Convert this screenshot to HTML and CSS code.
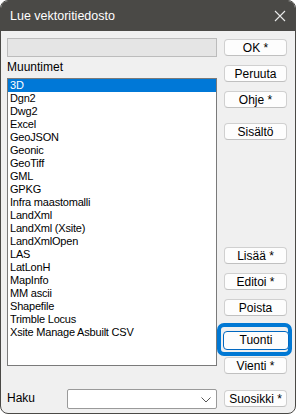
FILE: index.html
```html
<!DOCTYPE html>
<html lang="fi">
<head>
    <meta charset="UTF-8">
    <title>Lue vektoritiedosto</title>
    <link rel="stylesheet" href="styles.css">
</head>
<body>
    <div class="window">
        <div class="titlebar">
            <span class="title">Lue vektoritiedosto</span>
            <svg class="close" width="12" height="12" viewBox="0 0 12 12">
                <path d="M1 1 L11 11 M11 1 L1 11" stroke="#e8e8e8" stroke-width="1.1" fill="none"/>
            </svg>
        </div>
        <div class="content">
            <div class="left">
                <div class="path-field"></div>
                <div class="label">Muuntimet</div>
                <div class="list">
                    <div class="item selected">3D</div>
                    <div class="item">Dgn2</div>
                    <div class="item">Dwg2</div>
                    <div class="item">Excel</div>
                    <div class="item">GeoJSON</div>
                    <div class="item">Geonic</div>
                    <div class="item">GeoTiff</div>
                    <div class="item">GML</div>
                    <div class="item">GPKG</div>
                    <div class="item">Infra maastomalli</div>
                    <div class="item">LandXml</div>
                    <div class="item">LandXml (Xsite)</div>
                    <div class="item">LandXmlOpen</div>
                    <div class="item">LAS</div>
                    <div class="item">LatLonH</div>
                    <div class="item">MapInfo</div>
                    <div class="item">MM ascii</div>
                    <div class="item">Shapefile</div>
                    <div class="item">Trimble Locus</div>
                    <div class="item">Xsite Manage Asbuilt CSV</div>
                </div>
                <div class="search-row">
                    <span class="search-label">Haku</span>
                    <div class="combo">
                        <svg width="10" height="6" viewBox="0 0 10 6">
                            <path d="M0.5 0.5 L5 5 L9.5 0.5" stroke="#555" stroke-width="1" fill="none"/>
                        </svg>
                    </div>
                </div>
            </div>
            <div class="right">
                <button class="btn btn-ok">OK *</button>
                <button class="btn btn-gap">Peruuta</button>
                <button class="btn btn-gap">Ohje *</button>
                <button class="btn btn-sisalto">Sisältö</button>
                <button class="btn btn-lisaa">Lisää *</button>
                <button class="btn btn-gap">Editoi *</button>
                <button class="btn btn-gap">Poista</button>
                <div class="focus-ring">
                    <button class="btn btn-focus">Tuonti</button>
                </div>
                <button class="btn btn-vienti">Vienti *</button>
                <button class="btn btn-suosikki">Suosikki *</button>
            </div>
        </div>
    </div>
</body>
</html>
```

FILE: styles.css
```css
body {
    margin: 0;
    background-color: #ffffff;
    font-family: "Liberation Sans", Arial, sans-serif;
}
.window {
    width: 296px;
    height: 414px;
    box-sizing: border-box;
    border: 1px solid #4a4946;
    border-radius: 8px;
    overflow: hidden;
    background-color: #f0f0f0;
}
.titlebar {
    height: 30px;
    background-color: #4a4946;
    display: flex;
    align-items: center;
    justify-content: space-between;
    padding: 0 9px 0 9px;
}
.title {
    color: #ffffff;
    font-size: 12.5px;
    margin-top: -1px;
}
.content {
    display: flex;
    padding: 0 0 0 6px;
}
.left {
    width: 210px;
    display: flex;
    flex-direction: column;
}
.path-field {
    margin-top: 7px;
    height: 19px;
    box-sizing: border-box;
    background-color: #e5e5e5;
    border: 1px solid #bcbcbc;
}
.label {
    font-size: 12px;
    height: 21px;
    line-height: 21px;
    color: #000;
}
.list {
    height: 288px;
    box-sizing: border-box;
    border: 1px solid #7a7a7a;
    background-color: #ffffff;
    font-size: 11px;
    letter-spacing: -0.2px;
}
.item {
    height: 13px;
    line-height: 13px;
    padding-left: 2px;
    color: #000;
    white-space: nowrap;
}
.item.selected {
    background-color: #0078d7;
    color: #ffffff;
}
.search-row {
    margin-top: 23px;
    display: flex;
    align-items: center;
}
.search-label {
    font-size: 12px;
    width: 60px;
    margin-top: -3px;
}
.combo {
    flex: 1;
    height: 20px;
    box-sizing: border-box;
    background-color: #ffffff;
    border: 1px solid #9a9a9a;
    border-radius: 2px;
    display: flex;
    align-items: center;
    justify-content: flex-end;
    padding-right: 5px;
    padding-top: 1px;
}
.right {
    width: 63px;
    margin-left: 7px;
    display: flex;
    flex-direction: column;
}
.btn {
    height: 17px;
    width: 63px;
    box-sizing: border-box;
    background-color: #fdfdfd;
    border: 1px solid #d0d0d0;
    border-bottom-color: #c0c0c0;
    border-radius: 4px;
    font-family: "Liberation Sans", Arial, sans-serif;
    font-size: 12px;
    color: #000;
    padding: 0;
    line-height: 14px;
}
.btn-ok {
    margin-top: 8px;
}
.btn-gap {
    margin-top: 9px;
}
.btn-sisalto {
    margin-top: 15px;
}
.btn-lisaa {
    margin-top: 107px;
}
.focus-ring {
    margin: 7px -5px 0 -7px;
    height: 33px;
    box-sizing: border-box;
    border: 4px solid #0078d4;
    border-radius: 7px;
    padding: 3px 1px 0 2px;
    background-color: #f0f0f0;
}
.btn-focus {
    width: 66px;
    height: 19px;
    border-color: #0067c0;
    line-height: 16px;
}
.btn-vienti {
    margin-top: 1px;
}
.btn-suosikki {
    margin-top: 16px;
}
```
